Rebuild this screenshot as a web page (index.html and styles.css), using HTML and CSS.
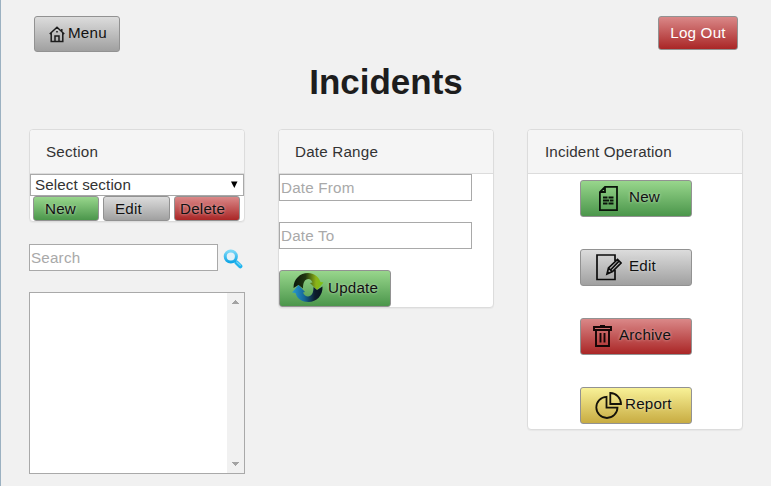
FILE: index.html
```html
<!DOCTYPE html>
<html lang="en">
<head>
<meta charset="utf-8">
<title>Incidents</title>
<link rel="stylesheet" href="styles.css">
</head>
<body>
<header class="topbar">
  <button class="btn grey menu"><svg class="ico-home" width="16" height="17" viewBox="0 0 16 17" fill="none" stroke="#1c1c1c" stroke-width="1.5"><path d="M.7 8 8 1.300 15.300 8M2.200 7v8.500h11.600V7M6 15.500V10h4v5.500M7.200 5.700h1.600M12.800 5V3"/></svg><span>Menu</span></button>
  <button class="btn red logout">Log Out</button>
</header>
<h1>Incidents</h1>
<main class="columns">
  <div class="column">
    <section class="card">
      <h2>Section</h2>
      <div class="select-wrap">
        <select><option>Select section</option></select>
        <svg class="caret" width="8" height="7" viewBox="0 0 8 7"><path d="M1 .5h6.500L4.300 7z" fill="#000"/></svg>
      </div>
      <div class="small-buttons">
        <button class="btn green mini">New</button>
        <button class="btn grey mini">Edit</button>
        <button class="btn red mini delete">Delete</button>
      </div>
    </section>
    <div class="search">
      <input type="text" placeholder="Search">
      <svg width="20" height="20" viewBox="0 0 20 20">
        <defs><linearGradient id="lens" x1="0" y1="0" x2="0" y2="1"><stop offset="0" stop-color="#7ad8f8"/><stop offset="1" stop-color="#10a6e6"/></linearGradient></defs>
        <path d="M13.500 13.500 17.300 17.300" stroke="#20b4ee" stroke-width="4.200" stroke-linecap="round"/>
        <path d="M13.800 13 17.300 16.300" stroke="#6fd2f7" stroke-width="1.300" stroke-linecap="round"/>
        <circle cx="7.800" cy="7.500" r="5.600" fill="#e3f1f8" stroke="url(#lens)" stroke-width="3"/>
      </svg>
    </div>
    <div class="list">
      <div class="scrollbar">
        <svg width="7" height="4" viewBox="0 0 7 4" shape-rendering="crispEdges"><path d="M3 0h1v1h1v1h1v1h1v1H0V3h1V2h1V1h1z" fill="#a3a3a3"/></svg>
        <svg width="7" height="4" viewBox="0 0 7 4" shape-rendering="crispEdges"><path d="M0 0h7v1H6v1H5v1H4v1H3V3H2V2H1V1H0z" fill="#a3a3a3"/></svg>
      </div>
    </div>
  </div>
  <div class="column">
    <section class="card dates">
      <h2>Date Range</h2>
      <input type="text" placeholder="Date From">
      <input type="text" placeholder="Date To">
      <button class="btn green large update">
        <svg width="32" height="32" viewBox="0 0 32 32">
          <defs>
            <linearGradient id="ringTop" x1="0" y1="0" x2="1" y2="0"><stop offset="0" stop-color="#0b160b"/><stop offset=".4" stop-color="#213611"/><stop offset=".75" stop-color="#8cb21a"/><stop offset="1" stop-color="#79c511"/></linearGradient>
            <linearGradient id="ringLow" x1="0" y1="0" x2="1" y2="0"><stop offset="0" stop-color="#299cd1"/><stop offset=".4" stop-color="#15679a"/><stop offset=".75" stop-color="#0c1c2c"/><stop offset="1" stop-color="#07131d"/></linearGradient>
          </defs>
          <path d="M1.500 16C1.500 7 8 1 16 1c6 0 10.500 3.500 12.500 9l3 .5-6.500 7.500-7-7 2.500-.5C19.500 8 18 7 16.500 7 12.500 7 11 11 11 16.500l-4.500-3.500z" fill="url(#ringTop)"/>
          <path d="M30.500 14.500C31 23.500 24.500 30 16.500 30 10.500 30 5 27 3.500 21L0 20.500l6.500-7.500 6.500 7-2 .5c1 2.500 3 4 5 4 3.500 0 5.500-3.500 5.500-9.500l3.500 3z" fill="url(#ringLow)"/>
        </svg><span>Update</span></button>
    </section>
  </div>
  <div class="column">
    <section class="card operations">
      <h2>Incident Operation</h2>
      <div class="stack">
        <button class="btn green large new"><svg width="19" height="25" viewBox="0 0 19 25" fill="none" stroke="#0a140a" stroke-width="1.800"><path d="M6 .9h12v23.200H.9V6zM6 .9V6H.9M4 11.500h4.500m1 0H14.500M4 14.500h6m.8 0h3.700M4 17.500h4.500m1 0H14.500"/></svg><span>New</span></button>
        <button class="btn grey large edit"><svg width="26" height="27" viewBox="0 0 26 27" fill="none" stroke="#0c0c0c" stroke-width="1.700"><path d="M19 7V1H1v24.500h18V16M11 20l1.500-6L21.500 5.500l3.500 3.500-8.500 8.500zM12.500 14l4 4M14.500 16l8-8.300M11 20l2-2"/></svg><span>Edit</span></button>
        <button class="btn red large archive"><svg width="19" height="22" viewBox="0 0 19 22" fill="none" stroke="#140606" stroke-width="1.900"><path d="M1 2h17v3H1zM3 5.200V21h13V5.200M7.500 8v9.500M11.500 8v9.500M7 1h5"/></svg><span>Archive</span></button>
        <button class="btn yellow large report"><svg width="27" height="27" viewBox="0 0 27 27" fill="none" stroke="#15130a" stroke-width="1.800"><path d="M11.500 4.800A10.600 10.600 0 1 0 22.500 15.600h-11zM15.300 1v11H26A11 11 0 0 0 15.300 1z"/></svg><span>Report</span></button>
      </div>
    </section>
  </div>
</main>
</body>
</html>
```
FILE: styles.css
```css
* { box-sizing: border-box; }
body {
  margin: 0;
  height: 486px;
  overflow: hidden;
  padding: 16px 28px 0;
  border-left: 1px solid #9bb1c1;
  background: #f1f1f1;
  color: #333;
  font: 15.2px/20px "Liberation Sans", Arial, sans-serif;
  letter-spacing: .2px;
}
button, input, select { font: inherit; letter-spacing: inherit; margin: 0; }
svg { display: block; flex: none; }
.topbar { display: flex; justify-content: space-between; align-items: flex-start; height: 36px; padding: 0 5px; }
.btn {
  display: flex;
  align-items: center;
  border: 1px solid #929292;
  border-radius: 3px;
  padding: 0;
  color: #111;
  text-shadow: 0 0 3px rgba(255,255,255,.6);
}
.grey { background: linear-gradient(#dcdcdc, #a0a0a0); }
.green { background: linear-gradient(#98d68c, #4b964b); }
.red { background: linear-gradient(#da8888, #aa2626); }
.yellow { background: linear-gradient(#f8f197, #c8ac42); }
.menu { width: 86px; height: 36px; padding: 0 0 2px 14px; gap: 3px; text-shadow: none; }
.ico-home { margin-top: 2px; }
.logout { width: 80px; height: 34px; justify-content: center; color: #fff; text-shadow: none; }
h1 { margin: 8px 0 0; height: 45px; line-height: 43px; font-size: 35px; letter-spacing: 0; text-align: center; color: #1d1d1d; }
.columns { display: grid; grid-template-columns: repeat(3, 216px); column-gap: 33px; margin-top: 24px; align-items: start; }
.card { border: 1px solid #dcdcdc; border-radius: 4px; background: #fff; box-shadow: 0 1px 1px rgba(0,0,0,.04); }
h2 {
  margin: 0;
  height: 44px;
  padding: 0 16px;
  border-bottom: 1px solid #dcdcdc;
  border-radius: 3px 3px 0 0;
  background: #f5f5f5;
  font-size: inherit;
  font-weight: normal;
  line-height: 44px;
}
input { display: block; height: 27px; padding: 0 1px; border: 1px solid #a9a9a9; border-radius: 0; background: #fff; }
input::placeholder { color: #a9a9a9; opacity: 1; }
.select-wrap { position: relative; height: 22px; }
select { display: block; width: 100%; height: 22px; padding: 0 4px; border: 1px solid #a9a9a9; border-radius: 0; background: #fff; color: #333; appearance: none; letter-spacing: .1px; }
.caret { position: absolute; right: 6px; top: 7px; }
.small-buttons { display: flex; gap: 4px; padding: 0 4px 0 3px; height: 25px; }
.mini { flex: 0 0 66px; height: 25px; padding: 0 0 0 11px; }
.mini:nth-child(2) { flex-basis: 67px; }
.mini.delete { padding-left: 5px; }
.search { display: flex; align-items: center; gap: 5px; margin-top: 22px; }
.search input { width: 189px; }
.search svg { margin-top: 3px; }
.list { display: flex; justify-content: flex-end; height: 182px; margin-top: 21px; border: 1px solid #a9a9a9; background: #fff; }
.scrollbar { display: flex; flex-direction: column; justify-content: space-between; align-items: center; width: 17px; padding: 7px 0; background: #f1f1f1; }
.dates input { width: 193px; margin-bottom: 21px; }
.large { width: 112px; height: 37px; padding-bottom: 2px; }
.large span { position: relative; top: -1px; }
.update { padding-left: 12px; gap: 4px; }
.update span { top: 0; }
.update svg { margin-top: 1px; }
.operations h2 { padding-left: 17px; letter-spacing: .15px; }
.stack { display: flex; flex-direction: column; align-items: center; gap: 32px; padding: 6px 0 5px 2px; }
.new { padding-left: 18px; gap: 11px; }
.edit { padding-left: 15px; gap: 7px; }
.archive { padding-left: 12px; gap: 7px; }
.report { padding-left: 14px; gap: 3px; }
.report svg, .edit svg, .new svg { margin-top: 2px; }
```
